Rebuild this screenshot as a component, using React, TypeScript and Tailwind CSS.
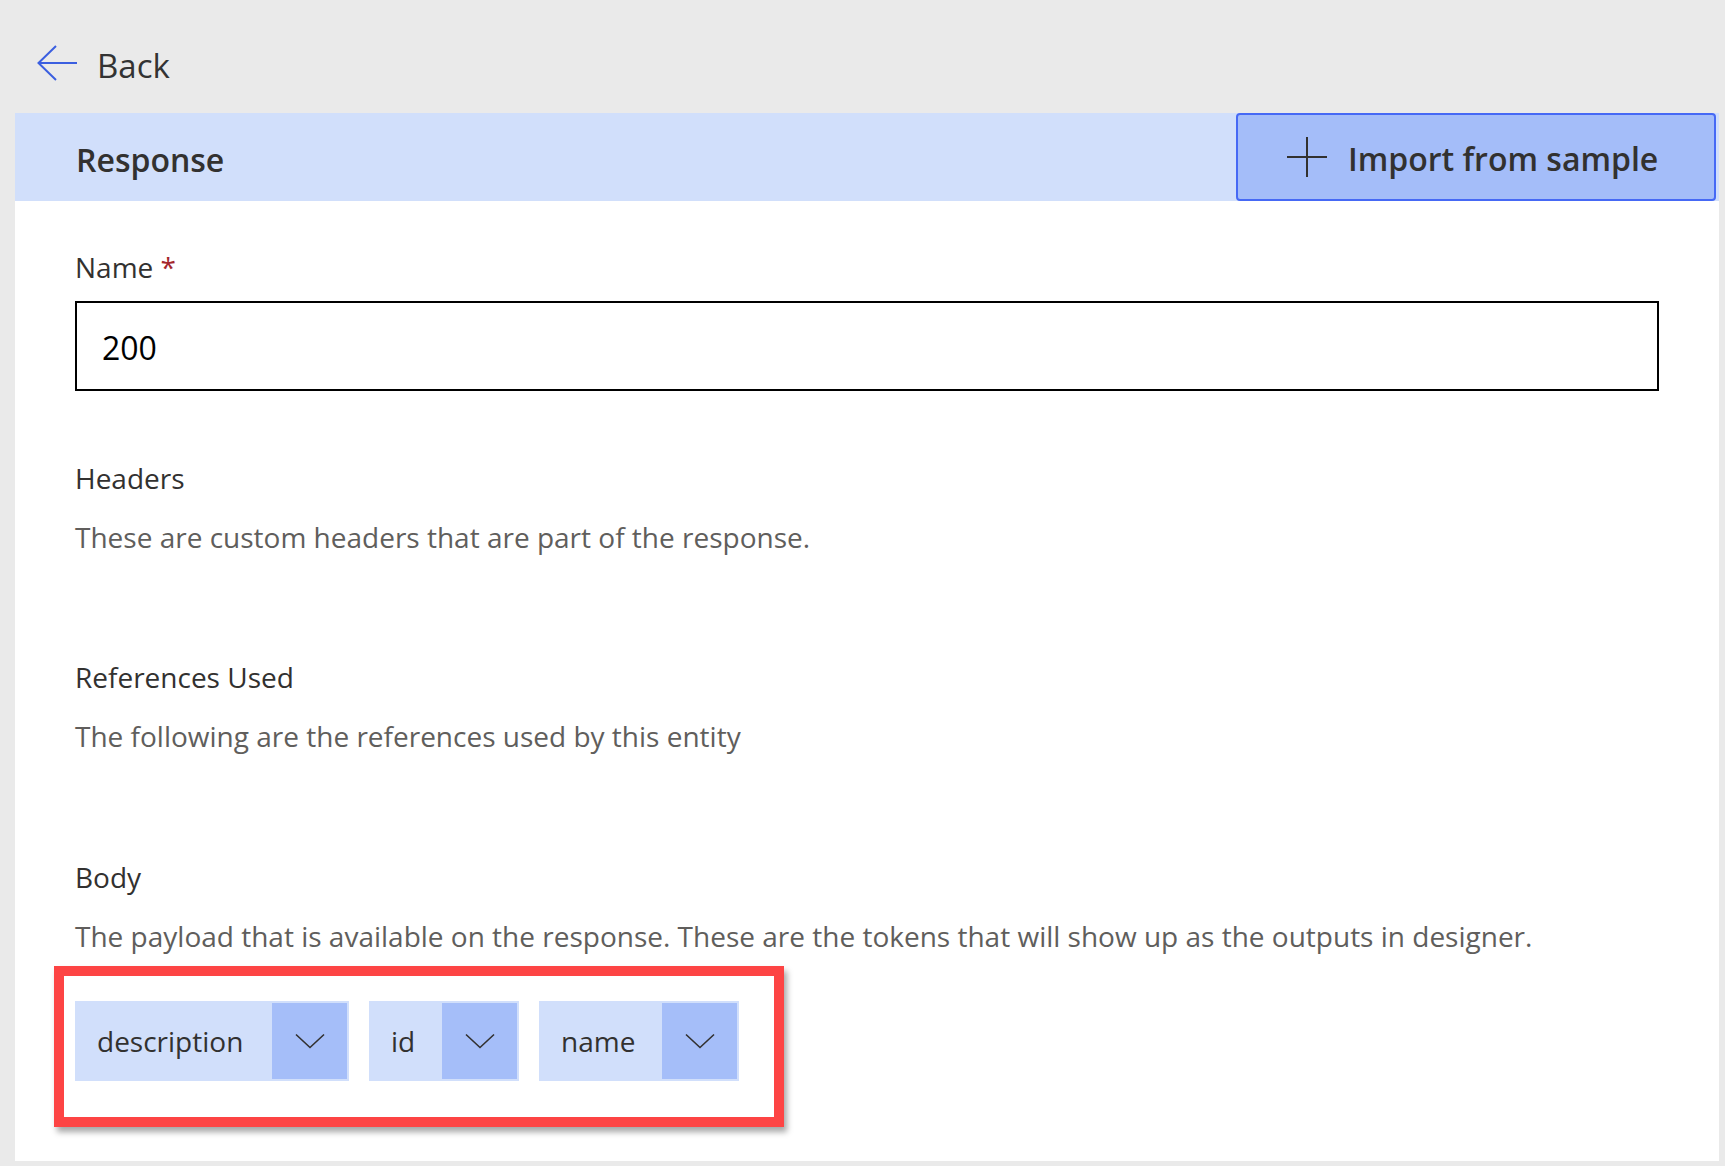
import React from 'react'

const fields = [
  { label: 'Headers', desc: 'These are custom headers that are part of the response.' },
  { label: 'References Used', desc: 'The following are the references used by this entity' },
]

const tokens = [
  { name: 'description', width: 'w-[274px]' },
  { name: 'id', width: 'w-[150px]' },
  { name: 'name', width: 'w-[200px]' },
]

function Chevron() {
  return (
    <svg width="30" height="16" viewBox="0 0 30 16" fill="none">
      <path d="M1 1.5 L15 14.5 L29 1.5" stroke="#323130" strokeWidth="1.6" />
    </svg>
  )
}

function Token({ name, width }: { name: string; width: string }) {
  return (
    <div className={`flex h-[80px] items-stretch bg-[#d1dffb] ${width}`}>
      <span className="flex-1 pl-[22px] text-[28px] leading-[80px] text-[#323130]">{name}</span>
      <div className="my-[2px] mr-[2px] flex w-[75px] items-center justify-center bg-[#a5bef9]">
        <Chevron />
      </div>
    </div>
  )
}

export default function App() {
  return (
    <div className="flex h-[1166px] flex-col bg-[#eaeaea] font-['Open_Sans',sans-serif]">
      <div className="flex h-[113px] shrink-0 items-start pl-[37px] pt-[45px]">
        <svg width="40" height="36" viewBox="0 0 40 36" fill="none">
          <path d="M19 1 L1.5 18 L19 35 M1.5 18 H40" stroke="#3b5fe0" strokeWidth="2" />
        </svg>
        <span className="ml-[20px] mt-[4px] text-[33px] leading-[33px] text-[#333333]">Back</span>
      </div>

      <div className="mb-[5px] ml-[15px] mr-[6px] flex flex-1 flex-col bg-white">
        <div className="flex h-[88px] shrink-0 items-stretch bg-[#d1dffb]">
          <h1 className="flex-1 pl-[61px] pt-[31px] text-[32px] font-semibold leading-[32px] text-[#323130]">
            Response
          </h1>
          <button className="mr-[3px] flex w-[480px] items-center rounded-[4px] border-2 border-[#4669f5] bg-[#a4bdf9] pl-[49px] text-[#323130]">
            <svg width="40" height="40" viewBox="0 0 40 40" fill="none">
              <path d="M20 0 V40 M0 20 H40" stroke="#323130" strokeWidth="2" />
            </svg>
            <span className="ml-[21px] mt-[3px] text-[32px] font-semibold leading-[32px]">Import from sample</span>
          </button>
        </div>

        <div className="flex flex-1 flex-col px-[60px] pb-[34px]">
          <div className="mt-[47px] text-[28px] leading-[38px] text-[#323130]">
            Name <span className="text-[#a4262c]">*</span>
          </div>
          <div className="mt-[15px] flex h-[90px] items-center border-2 border-black pl-[25px] pt-[3px] text-[32px] leading-[32px] text-black">
            200
          </div>

          {fields.map((f, i) => (
            <div key={f.label} className={i === 0 ? 'mt-[68px]' : 'mt-[102px]'}>
              <div className="text-[28px] leading-[38px] text-[#323130]">{f.label}</div>
              <div className="mt-[21px] text-[28px] leading-[38px] text-[#605e5c]">{f.desc}</div>
            </div>
          ))}

          <div className="mt-[103px]">
            <div className="text-[28px] leading-[38px] text-[#323130]">Body</div>
            <div className="mt-[21px] text-[28px] leading-[38px] text-[#605e5c]">
              The payload that is available on the response. These are the tokens that will show up as the outputs in designer.
            </div>
          </div>

          <div className="-ml-[21px] mt-[11px] flex w-[730px] gap-[20px] border-[10px] border-[#fd4444] pb-[36px] pl-[11px] pt-[25px] shadow-[3px_5px_6px_rgba(0,0,0,0.35)]">
            {tokens.map((t) => (
              <Token key={t.name} name={t.name} width={t.width} />
            ))}
          </div>
        </div>
      </div>
    </div>
  )
}
